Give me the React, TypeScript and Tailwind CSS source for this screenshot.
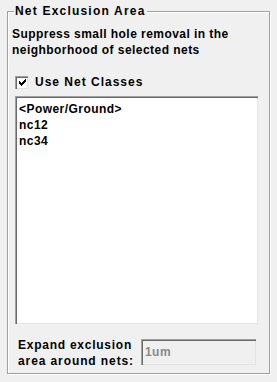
import React from "react";

const CHECK = [
  "......#",
  ".....##",
  "#...###",
  "##.###.",
  "#####..",
  ".###...",
  "..#....",
];

function CheckGlyph() {
  const rects: React.ReactElement[] = [];
  CHECK.forEach((row, y) =>
    row.split("").forEach((c, x) => {
      if (c === "#") rects.push(<rect key={`${x}-${y}`} x={x} y={y} width="1" height="1" fill="#000" />);
    })
  );
  return (
    <svg width="7" height="7" viewBox="0 0 7 7" shapeRendering="crispEdges">
      {rects}
    </svg>
  );
}

export default function App() {
  const items = ["<Power/Ground>", "nc12", "nc34"];
  return (
    <div
      className="w-[277px] h-[382px] bg-[#f0f0f0] pt-[11px] pl-[7px] text-black tracking-[0.45px]"
      style={{ fontFamily: '"Liberation Sans", Arial, sans-serif' }}
    >
      <div className="relative w-[263px] h-[363px] border border-[#a0a0a0] shadow-[inset_1px_1px_0_#ffffff,1px_1px_0_#ffffff]">
        <span className="absolute left-[6px] top-[-8px] px-[1px] bg-[#f0f0f0] text-[12px] font-bold leading-[14px] tracking-[1.2px]">
          Net Exclusion Area
        </span>
        <div className="pl-[4px] pt-[14px] text-[12px] font-bold leading-[16px]">
          <div>Suppress small hole removal in the</div>
          <div>neighborhood of selected nets</div>
        </div>
        <div className="flex items-center pl-[7px] pt-[17px] gap-[7px]">
          <div className="w-[13px] h-[13px] bg-white border-t border-l border-[#a0a0a0] border-r-white border-b-white shadow-[inset_1px_1px_0_#696969,inset_-1px_-1px_0_#e3e3e3] flex items-center justify-center">
            <CheckGlyph />
          </div>
          <span className="text-[12px] font-bold leading-[14px] tracking-[1px]">Use Net Classes</span>
        </div>
        <div className="ml-[7px] mt-[7px] w-[243px] h-[228px] bg-white border-t border-l border-[#a0a0a0] border-r-white border-b-white shadow-[inset_1px_1px_0_#696969,inset_-1px_-1px_0_#e3e3e3] pt-[4px] pl-[3px]">
          {items.map((t) => (
            <div key={t} className="text-[12px] font-bold leading-[16px]">
              {t}
            </div>
          ))}
        </div>
        <div className="flex items-center pl-[10px] pt-[13px]">
          <div className="text-[12px] font-bold leading-[16px] w-[123px]">
            <div className="tracking-[0.75px]">Expand exclusion</div>
            <div className="tracking-[0.9px]">area around nets:</div>
          </div>
          <div className="mt-[-3px] w-[115px] h-[26px] border-t border-l border-[#a0a0a0] border-r-white border-b-white shadow-[inset_1px_1px_0_#696969,inset_-1px_-1px_0_#e3e3e3] bg-[#f0f0f0] flex items-center pl-[3px] text-[12px] font-bold text-[#8a8a8a]">
            1um
          </div>
        </div>
      </div>
    </div>
  );
}
